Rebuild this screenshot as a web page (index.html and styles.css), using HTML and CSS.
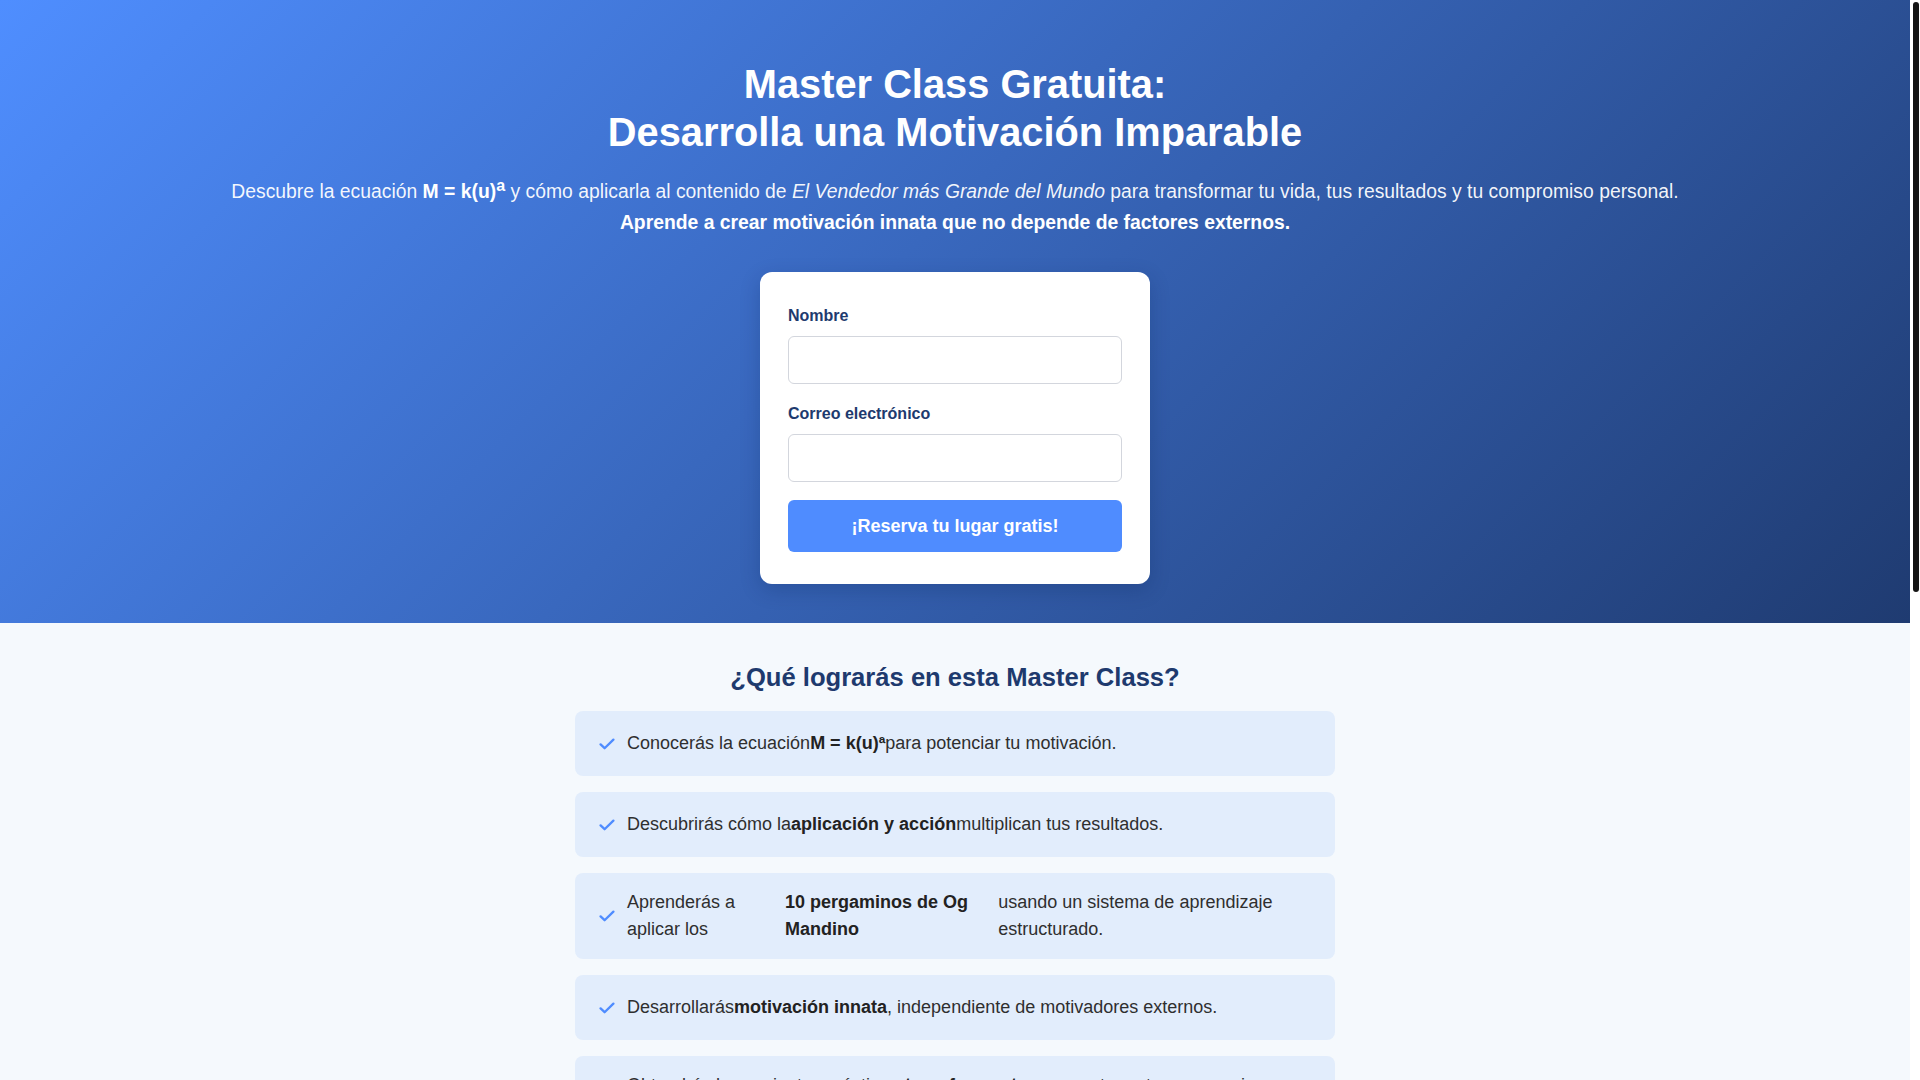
FILE: index.html
```html
<!DOCTYPE html>
<html lang="es">
<head>
<meta charset="utf-8">
<title>Master Class Gratuita: Desarrolla una Motivación Imparable</title>
<link rel="stylesheet" href="styles.css">
</head>
<body>
<section class="hero">
  <h1>Master Class Gratuita:<br>Desarrolla una Motivación Imparable</h1>
  <p class="lead">Descubre la ecuación <strong>M = k(u)<sup>a</sup></strong> y cómo aplicarla al contenido de <em>El Vendedor más Grande del Mundo</em> para transformar tu vida, tus resultados y tu compromiso personal.<br><strong>Aprende a crear motivación innata que no depende de factores externos.</strong></p>
  <form class="card">
    <label class="label" for="nombre">Nombre</label>
    <input class="field" id="nombre" type="text">
    <label class="label" for="correo">Correo electrónico</label>
    <input class="field" id="correo" type="email">
    <button class="btn" type="button">¡Reserva tu lugar gratis!</button>
  </form>
</section>

<section class="benefits">
  <h2 class="section-title">¿Qué lograrás en esta Master Class?</h2>
  <ul class="list">
    <li class="item"><span class="ic"><svg width="16" height="12" viewBox="0 0 16 12"><path d="M1.6 6.4 5.6 10.2 14.4 1.6" fill="none" stroke="#4f8cff" stroke-width="2.3" stroke-linecap="round" stroke-linejoin="round"/></svg></span>Conocerás la ecuación<strong>M = k(u)ª</strong>para potenciar tu motivación.</li>
    <li class="item"><span class="ic"><svg width="16" height="12" viewBox="0 0 16 12"><path d="M1.6 6.4 5.6 10.2 14.4 1.6" fill="none" stroke="#4f8cff" stroke-width="2.3" stroke-linecap="round" stroke-linejoin="round"/></svg></span>Descubrirás cómo la<strong>aplicación y acción</strong>multiplican tus resultados.</li>
    <li class="item"><span class="ic"><svg width="16" height="12" viewBox="0 0 16 12"><path d="M1.6 6.4 5.6 10.2 14.4 1.6" fill="none" stroke="#4f8cff" stroke-width="2.3" stroke-linecap="round" stroke-linejoin="round"/></svg></span>Aprenderás a aplicar los<strong>10 pergaminos de Og Mandino</strong>usando un sistema de aprendizaje estructurado.</li>
    <li class="item"><span class="ic"><svg width="16" height="12" viewBox="0 0 16 12"><path d="M1.6 6.4 5.6 10.2 14.4 1.6" fill="none" stroke="#4f8cff" stroke-width="2.3" stroke-linecap="round" stroke-linejoin="round"/></svg></span>Desarrollarás<strong>motivación innata</strong>, independiente de motivadores externos.</li>
    <li class="item"><span class="ic"><svg width="16" height="12" viewBox="0 0 16 12"><path d="M1.6 6.4 5.6 10.2 14.4 1.6" fill="none" stroke="#4f8cff" stroke-width="2.3" stroke-linecap="round" stroke-linejoin="round"/></svg></span>Obtendrás herramientas prácticas para<strong>transformar tu vida</strong>y mantener tu compromiso personal.</li>
    <li class="item"><span class="ic"><svg width="16" height="12" viewBox="0 0 16 12"><path d="M1.6 6.4 5.6 10.2 14.4 1.6" fill="none" stroke="#4f8cff" stroke-width="2.3" stroke-linecap="round" stroke-linejoin="round"/></svg></span>Crearás un plan de acción personal para alcanzar tus metas.</li>
  </ul>
</section>

<section class="about">
  <h2 class="section-title">¿Para quién es esta Master Class?</h2>
  <p class="about-text">Para vendedores, emprendedores y profesionales que quieren dejar de depender de la motivación externa y construir resultados sostenibles con disciplina, aplicación y acción.</p>
  <button class="btn btn-wide" type="button">¡Reserva tu lugar gratis!</button>
</section>

<footer class="footer">© 2024 Master Class Gratuita. Todos los derechos reservados.</footer>

<div class="scroll-thumb" aria-hidden="true"></div>
</body>
</html>
```

FILE: styles.css
```css
html {
  background: #ffffff;
}
body {
  margin: 0 10px 0 0;
  font-family: "Liberation Sans", Arial, sans-serif;
  color: #333333;
  background: #f5f9fd;
}
.scroll-thumb {
  position: fixed;
  top: 2px;
  right: 1px;
  width: 6px;
  height: 590px;
  border-radius: 3px;
  background: #141414;
}
.hero {
  background: linear-gradient(135deg, #4f8eff 0%, #1f3b71 100%);
  color: #ffffff;
  text-align: center;
  padding: 61px 20px 39px;
}
.hero h1 {
  margin: 0 0 16px;
  font-size: 39.8px;
  line-height: 1.2;
  font-weight: 700;
}
.lead {
  margin: 0 0 34px;
  font-size: 19.33px;
  line-height: 1.59;
  color: rgba(255, 255, 255, 0.94);
}
.lead strong {
  color: #ffffff;
}
.card {
  box-sizing: border-box;
  width: 390px;
  margin: 0 auto;
  padding: 32px 28px;
  background: #ffffff;
  border-radius: 12px;
  box-shadow: 0 6px 20px rgba(10, 30, 80, 0.22);
  text-align: left;
}
.label {
  display: block;
  font-size: 16px;
  line-height: 24px;
  font-weight: 700;
  color: #1e3a6e;
  margin-bottom: 8px;
}
.field {
  display: block;
  box-sizing: border-box;
  width: 100%;
  height: 48px;
  margin: 0 0 18px;
  border: 1px solid #d3d6dd;
  border-radius: 6px;
  background: #ffffff;
  font: inherit;
}
.btn {
  display: block;
  width: 100%;
  height: 52px;
  border: none;
  border-radius: 6px;
  background: #4f8cff;
  color: #ffffff;
  font-family: "Liberation Sans", Arial, sans-serif;
  font-size: 18px;
  font-weight: 700;
}
.benefits {
  padding: 39px 20px 40px;
}
.section-title {
  margin: 0 0 18px;
  text-align: center;
  font-size: 25.6px;
  line-height: 1.2;
  font-weight: 700;
  color: #1e3a6e;
}
.list {
  list-style: none;
  margin: 0 auto;
  padding: 0;
  max-width: 760px;
  display: flex;
  flex-direction: column;
  gap: 16px;
}
.item {
  display: flex;
  align-items: center;
  padding: 16px 24px;
  background: #e2edfc;
  border-radius: 8px;
  font-size: 18px;
  line-height: 1.5;
  color: #2f2f2f;
}
.item strong {
  color: #222222;
}
.ic {
  flex: none;
  display: flex;
  align-items: center;
  width: 16px;
  height: 33px;
  margin-right: 12px;
}
.about {
  padding: 60px 20px 80px;
  background: #ffffff;
  text-align: center;
}
.about-text {
  max-width: 760px;
  margin: 0 auto 32px;
  font-size: 18px;
  line-height: 1.6;
  color: #444444;
}
.btn-wide {
  width: 334px;
  margin: 0 auto;
}
.footer {
  padding: 60px 20px 160px;
  background: #1e3a6e;
  color: #dbe5f7;
  text-align: center;
  font-size: 14px;
}
```
